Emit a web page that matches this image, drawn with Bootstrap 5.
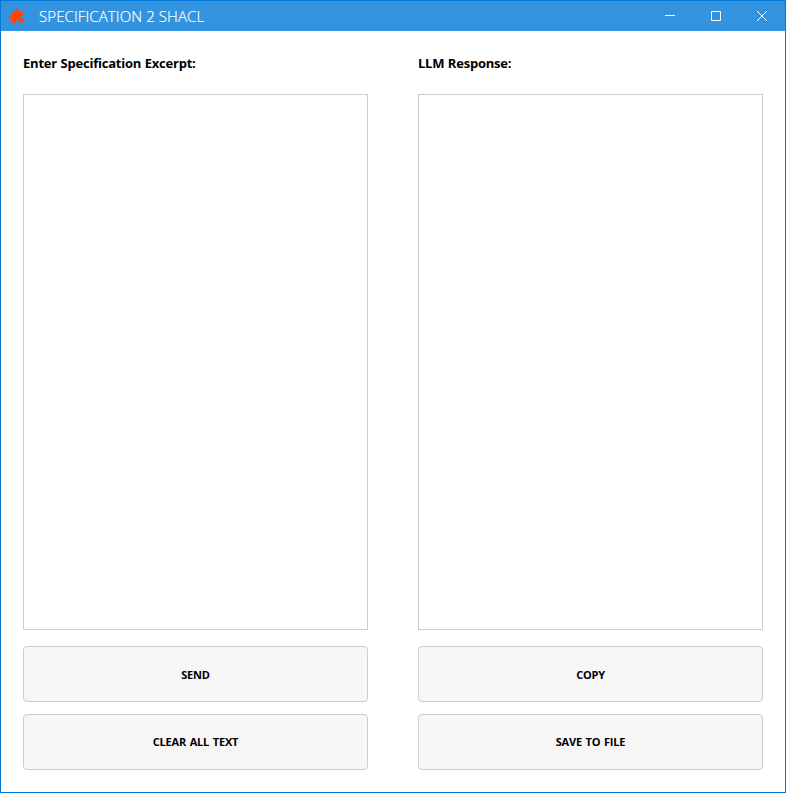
<!DOCTYPE html>
<html lang="en">
<head>
<meta charset="utf-8">
<title>SPECIFICATION 2 SHACL</title>
<link href="https://cdn.jsdelivr.net/npm/bootstrap@5.3.0/dist/css/bootstrap.min.css" rel="stylesheet">
<style>
body { font-family: "Open Sans", "Noto Sans", sans-serif; color: #000; }
.app-window { border: 1px solid #0078d7; }
.title-bar { height: 30px; background: #3393df; color: #fff; padding-left: 8px; }
.title-text { font-size: 15px; font-weight: 300; line-height: 30px; margin-left: 14px; letter-spacing: .1px; -webkit-text-stroke: .2px #fff; }
.win-control { width: 46px; height: 30px; }
.panes { padding: 0 22px 22px; gap: 50px; }
.pane { flex: 1 1 0; min-width: 0; }
.pane-label { height: 63px; padding-top: 22px; font-size: 13px; font-weight: 700; line-height: 20px; letter-spacing: -.22px; word-spacing: .4px; }
.pane-text { height: 536px; resize: none; border-color: #ccc; margin-bottom: 16px; }
.action { height: 56px; background: #f6f6f6; border-color: #ccc; border-radius: 4px; color: #000; font-size: 11px; font-weight: 700; letter-spacing: -.2px; word-spacing: 1px; padding: 2px 0 0; }
.action + .action { margin-top: 12px; padding-top: 0; }
</style>
</head>
<body>
<main class="app-window vh-100 d-flex flex-column bg-white overflow-hidden">
  <header class="title-bar d-flex align-items-center flex-shrink-0">
    <svg width="16" height="16" viewBox="0 0 16 16" aria-hidden="true"><path fill="#ff4500" d="M3 4H6.500V3.300C5.500 2 6.500 .800 8 .800S10.500 2 9.500 3.300V4H14V7.500H12C11 8.500 11 9.500 12 10.500H14.500V14.500H10.500V13C9.500 12 8 12 7 13V15H3V10.500C1.800 11.500 .300 10.500 .300 9S1.800 6.500 3 7.500Z"/></svg>
    <span class="title-text">SPECIFICATION 2 SHACL</span>
    <div class="d-flex ms-auto" aria-hidden="true">
      <svg class="win-control" viewBox="0 0 46 30" fill="none" stroke="#fff"><path d="M18 14.500h10"/></svg>
      <svg class="win-control" viewBox="0 0 46 30" fill="none" stroke="#fff"><path d="M18.500 10.500h9v9h-9z"/></svg>
      <svg class="win-control" viewBox="0 0 46 30" fill="none" stroke="#fff"><path d="M18 10l10 10M28 10L18 20"/></svg>
    </div>
  </header>
  <div class="panes d-flex">
    <section class="pane d-flex flex-column">
      <label class="pane-label" for="excerpt">Enter Specification Excerpt:</label>
      <textarea class="pane-text form-control rounded-0" id="excerpt"></textarea>
      <button type="button" class="action btn">SEND</button>
      <button type="button" class="action btn">CLEAR ALL TEXT</button>
    </section>
    <section class="pane d-flex flex-column">
      <label class="pane-label" for="response">LLM Response:</label>
      <textarea class="pane-text form-control rounded-0" id="response"></textarea>
      <button type="button" class="action btn">COPY</button>
      <button type="button" class="action btn">SAVE TO FILE</button>
    </section>
  </div>
</main>
<script src="https://cdn.jsdelivr.net/npm/bootstrap@5.3.0/dist/js/bootstrap.bundle.min.js"></script>
</body>
</html>
